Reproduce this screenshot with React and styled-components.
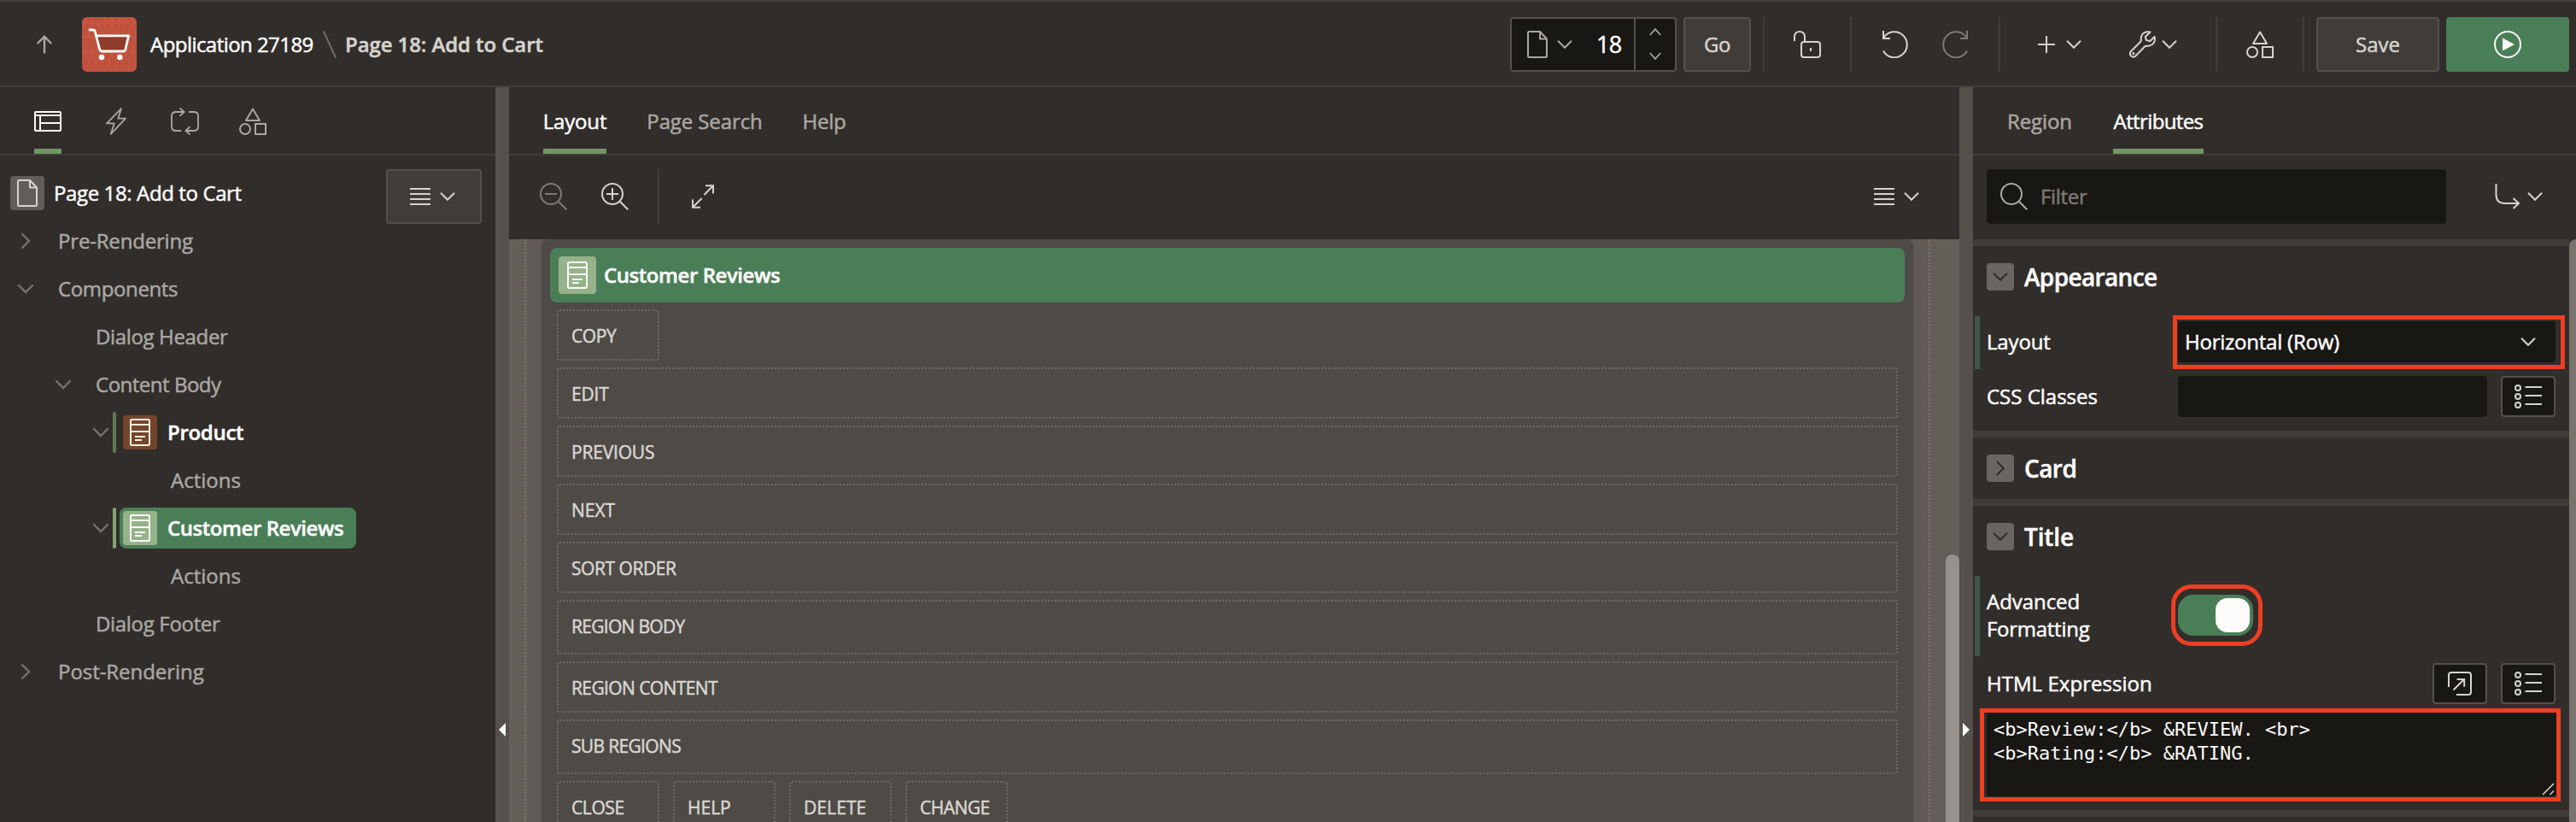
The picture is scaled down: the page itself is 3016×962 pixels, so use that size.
import React from "react";
import styled, { createGlobalStyle, css } from "styled-components";

const c = {
  bg: "#312d2a",
  line: "#403c38",
  dark: "#191714",
  edge: "#55504b",
  text: "#fcfbfa",
  soft: "#d6d3cf",
  muted: "#aaa7a3",
  dim: "#7d7974",
  green: "#4a7e57",
  leaf: "#739468",
  sage: "#96b28a",
  mark: "#ec3f24",
};

const GlobalStyle = createGlobalStyle`
  *, *::before, *::after { box-sizing: border-box; }
  body {
    margin: 0;
    background: ${c.bg};
    color: ${c.text};
    font-family: "Open Sans", "Noto Sans", sans-serif;
    font-size: 24px;
    line-height: 32px;
  }
  svg { display: block; flex: none; }
`;

/* ---------- text ---------- */

const Text = styled.span`
  display: block;
  flex: none;
  white-space: pre;
  color: ${(p) => p.$color || c.text};
  font-size: ${(p) => p.$size || 24}px;
  font-weight: ${(p) => (p.$bold ? 600 : 400)};
  letter-spacing: ${(p) => p.$ls ?? -0.4}px;
  -webkit-text-stroke: 0.5px currentColor;
`;

/* ---------- icons ---------- */

const Svg = ({ w, h, color = c.soft, sw = 2, children }) => (
  <svg width={w} height={h} viewBox={`0 0 ${w} ${h}`} fill="none" stroke={color} strokeWidth={sw}>
    {children}
  </svg>
);

const ChevronDown = ({ color, sw = 2 }) => (
  <Svg w={18} h={10} color={color} sw={sw}>
    <path d="M1 .8 9 8.8 17 .8" />
  </Svg>
);
const SmallChevron = ({ up }) => (
  <Svg w={14} h={9} color={c.muted} sw={1.8}>
    <path d={up ? "M.8 8 7 1.2 13.2 8" : "M.8 1 7 7.8 13.2 1"} />
  </Svg>
);
const TreeChevron = ({ open }) =>
  open ? (
    <Svg w={20} h={12} color="#76726d" sw={2.4}>
      <path strokeLinecap="round" d="M2 2 10 10 18 2" />
    </Svg>
  ) : (
    <Svg w={12} h={20} color="#76726d" sw={2.4}>
      <path strokeLinecap="round" d="M2 2 10 10 2 18" />
    </Svg>
  );
const BoxChevron = ({ open }) =>
  open ? (
    <Svg w={18} h={10} color={c.bg} sw={2}>
      <path d="M1 .8 9 8.8 17 .8" />
    </Svg>
  ) : (
    <Svg w={10} h={18} color={c.bg} sw={2}>
      <path d="M.8 1 8.8 9 .8 17" />
    </Svg>
  );
const ArrowUp = () => (
  <Svg w={20} h={22} color={c.muted} sw={2.4}>
    <path d="M10 21.5V2M1.8 10 10 1.8 18.2 10" />
  </Svg>
);
const Slash = () => (
  <Svg w={16} h={32} color="#6f6a66">
    <path d="M.8.5 15 31.5" />
  </Svg>
);
const Doc = ({ color }) => (
  <Svg w={24} h={32} color={color}>
    <path strokeLinejoin="round" d="M1 2.500Q1 1 2.500 1H15L23 9.500V29.500Q23 31 21.500 31H2.500Q1 31 1 29.500ZM15 1V9.500H23" />
  </Svg>
);
const RegionIcon = ({ color = c.text }) => (
  <Svg w={24} h={32} color={color}>
    <rect x="1" y="1" width="22" height="30" rx="1.500" />
    <path d="M1 7H23M1 15H23M6 21H18M6 25H14" />
  </Svg>
);
const LayoutIcon = () => (
  <Svg w={32} h={24} color={c.text}>
    <rect x="1" y="1" width="30" height="22" rx="1" />
    <path d="M1 5H31M7 5V23M7 14H31" />
  </Svg>
);
const Bolt = () => (
  <Svg w={24} h={32} color={c.muted} sw={1.8}>
    <path strokeLinejoin="round" d="M17.900 1.200 1 18.300H9.800L5.800 30.800 23 12.700H14.300Z" />
  </Svg>
);
const Loop = () => (
  <Svg w={33} h={32} color={c.muted} sw={1.8}>
    <path d="M12 27H6Q1 27 1 22V10Q1 5 6 5H15.500M10.500.6 15.600 5 10.500 9.800M21 5H27Q32 5 32 10V22Q32 27 27 27H17.500M22.500 22.200 17.400 27 22.500 31.400" />
  </Svg>
);
const Shapes = ({ color = c.soft }) => (
  <Svg w={32} h={32} color={color}>
    <path strokeLinejoin="round" d="M16 1.500 24 15H8Z" />
    <circle cx="7" cy="25" r="6" />
    <rect x="19" y="19" width="12" height="12" />
  </Svg>
);
const Lock = () => (
  <Svg w={32} h={32}>
    <rect x="9" y="13" width="22" height="18" rx="3" />
    <path d="M1 12V6.500A6 5.500 0 0 1 13 6.500V13M20 20V24" />
  </Svg>
);
const Undo = () => (
  <Svg w={32} h={32}>
    <path d="M2 23.500A14.800 15 0 1 0 2.600 8M2 0V9H10" />
  </Svg>
);
const Redo = () => (
  <Svg w={32} h={32} color={c.dim}>
    <path d="M30 23.500A14.800 15 0 1 1 29.400 8M30 0V9H22" />
  </Svg>
);
const Plus = () => (
  <Svg w={32} h={32}>
    <path d="M16 6V26M6 16H26" />
  </Svg>
);
const Wrench = () => (
  <Svg w={32} h={32}>
    <path
      strokeLinejoin="round"
      d="M25.500 1.500C20 .2 15.500 3.200 14.800 7.500C14.500 10 15.500 11.500 14 13L2.300 24.800A4 4 0 0 0 7.600 30.200L18.800 18.800C20.500 17 22 18 24.500 17.600C29 16.800 32 12.500 30.500 7L25.200 12.200 20.800 10.900 19.800 6.900Z"
    />
    <circle cx="5.800" cy="26.600" r=".6" />
  </Svg>
);
const Play = () => (
  <Svg w={32} h={32} color={c.text}>
    <circle cx="16" cy="16" r="15" />
    <path d="M10 8.500 24 16 10 23.500Z" fill={c.text} stroke="none" />
  </Svg>
);
const Lens = ({ color, sign }) => (
  <Svg w={32} h={32} color={color}>
    <circle cx="13" cy="13" r="12" />
    <path d="M21.500 21.500 31.300 31.300" />
    {sign && <path d={sign === "plus" ? "M6 13H20M13 6V20" : "M6 13H20"} />}
  </Svg>
);
const Expand = () => (
  <Svg w={26} h={28}>
    <path d="M16 1.200H25V10.500M24.500 1.800 14.500 12M1 17.500V26.800H10M1.500 26.200 11.700 16" />
  </Svg>
);
const Bars = () => (
  <Svg w={24} h={20}>
    <path d="M0 1H24M0 7H24M0 13H24M0 19H24" />
  </Svg>
);
const GoTo = () => (
  <Svg w={30} h={30}>
    <path d="M1.500 0V13Q1.500 23 12 23H28M21.500 17 28 23 21.500 29" />
  </Svg>
);
const ListIcon = () => (
  <Svg w={32} h={28}>
    <circle cx="4" cy="4" r="3" />
    <circle cx="4" cy="14" r="3" />
    <circle cx="4" cy="24" r="3" />
    <path d="M12.500 3H32M12.500 13H32M12.500 23H32" />
  </Svg>
);
const PopOut = () => (
  <Svg w={28} h={28}>
    <path d="M1 18V4Q1 1 4 1H24Q27 1 27 4V24Q27 27 24 27H10M6.500 21.500 19 9M10.500 8.900H19.200V17.800" />
  </Svg>
);
const Cart = () => (
  <svg width="64" height="64" viewBox="0 0 64 64" fill="none">
    <g stroke="#b54835" strokeWidth="1" opacity=".8">
      {[-4, 13, 30, 47, 60].map((y, r) => (
        <path
          key={y}
          d={`M${r % 2 ? -3 : 0} ${y}${"q2-9 4 0t4 8q1-4 0-8".repeat(9)}`}
        />
      ))}
    </g>
    <path d="M17 22H54.500L50 40H21Z" fill="#8f3c2c" />
    <path
      d="M9 15H13Q14.800 15 15.300 17L20.500 37Q21.200 40 23.500 40H48.500Q50.300 40 50.800 38L54.600 21.800H17"
      stroke="#fff"
      strokeWidth="2.800"
      strokeLinecap="round"
      strokeLinejoin="round"
    />
    <circle cx="23" cy="47" r="3.200" fill="#fff" />
    <circle cx="44.300" cy="47" r="3.200" fill="#fff" />
  </svg>
);

/* ---------- header ---------- */

const Page = styled.div`
  display: flex;
  flex-direction: column;
  width: 3016px;
  height: 962px;
  overflow: hidden;
`;
const Header = styled.header`
  display: flex;
  justify-content: space-between;
  flex: none;
  height: 102px;
  padding: 18px 8px 14px 42px;
  border-top: 2px solid ${c.line};
  border-bottom: 2px solid ${c.line};
`;
const Crumbs = styled.div`
  display: flex;
  align-items: center;
  height: 64px;
`;
const AppIcon = styled.div`
  width: 64px;
  height: 64px;
  margin: 0 16px 0 34px;
  border-radius: 6px;
  overflow: hidden;
  background: #c35641;
`;
const CrumbGap = styled.div`
  width: 37px;
  padding-left: 11px;
`;
const CrumbLink = styled.div`
  width: 191px;
`;
const Actions = styled.div`
  display: flex;
  height: 64px;
`;
const PagePicker = styled.div`
  display: flex;
  width: 195px;
  margin-right: 8px;
  border: 2px solid ${c.edge};
  border-radius: 4px;
  background: ${c.dark};
`;
const PickerMain = styled.div`
  display: flex;
  align-items: center;
  width: 143px;
  padding-left: 18px;
  gap: 11px;
`;
const PageNumber = styled.div`
  margin-left: 17px;
`;
const Stepper = styled.div`
  display: flex;
  flex: 1;
  flex-direction: column;
  align-items: center;
  justify-content: space-between;
  padding: 11px 0 12px;
  border-left: 2px solid ${c.edge};
`;
const Button = styled.div`
  display: flex;
  align-items: center;
  justify-content: center;
  gap: 11px;
  flex: none;
  width: ${(p) => p.$w}px;
  height: 64px;
  border-radius: 4px;
  ${(p) =>
    p.$hot
      ? css`
          background: ${c.green};
        `
      : css`
          background: #403c38;
          border: 2px solid ${c.edge};
        `}
`;
const MenuButton = styled(Button)`
  padding-right: 3px;
`;
const Rule = styled.div`
  flex: none;
  width: 2px;
  height: 64px;
  background: ${c.line};
`;
const Spacer = styled.div`
  flex: none;
  width: ${(p) => p.$w}px;
`;
const Cell = styled.div`
  display: flex;
  align-items: center;
  justify-content: center;
  gap: ${(p) => p.$gap || 0}px;
  width: ${(p) => p.$w}px;
`;
const Split = styled.div`
  display: flex;
  align-items: center;
  gap: ${(p) => p.$gap}px;
`;

/* ---------- shared panes ---------- */

const Body = styled.main`
  display: flex;
  flex: 1;
  min-height: 0;
`;
const Pane = styled.section`
  display: flex;
  flex-direction: column;
  flex: none;
  width: ${(p) => p.$w}px;
`;
const Splitter = styled.div`
  display: flex;
  justify-content: center;
  flex: none;
  width: 16px;
  padding-top: 744px;
  background: #55504b;
`;
const Tabs = styled.nav`
  display: flex;
  gap: 48px;
  flex: none;
  height: 80px;
  padding-left: 40px;
  border-bottom: 2px solid ${c.line};
`;
const Tab = styled.div`
  display: flex;
  align-items: center;
  justify-content: center;
  width: ${(p) => p.$w}px;
  padding-top: 8px;
  border-bottom: 6px solid ${(p) => (p.$on ? c.leaf : "transparent")};
`;
const Toolbar = styled.div`
  display: flex;
  align-items: center;
  flex: none;
  height: 98px;
  padding: 0 ${(p) => p.$r}px 2px ${(p) => p.$l}px;
`;
const Push = styled.div`
  flex: 1;
`;

/* ---------- tree ---------- */

const TreeArea = styled.div`
  display: flex;
  padding: 16px 16px 0 0;
`;
const Tree = styled.div`
  flex: 1;
`;
const Node = styled.div`
  display: flex;
  align-items: center;
  height: 56px;
  padding-left: ${(p) => p.$level * 44}px;
`;
const RootNode = styled(Node)`
  padding-left: 12px;
  gap: 11px;
`;
const Toggle = styled.div`
  display: flex;
  justify-content: center;
  flex: none;
  width: ${(p) => (p.$tight ? 42 : 68)}px;
  padding-left: ${(p) => (p.$tight ? 18 : 0)}px;
  padding-right: ${(p) => (p.$tight ? 0 : 8)}px;
`;
const Strip = styled.div`
  flex: none;
  width: 4px;
  height: 48px;
  margin: 0 4px 0 2px;
  border-radius: 2px;
  background: ${(p) => p.$color};
`;
const Pill = styled.div`
  display: flex;
  align-items: center;
  gap: 12px;
  height: 48px;
  padding: 0 16px 0 4px;
  width: 277px;
  border-radius: 8px;
  background: ${(p) => (p.$on ? c.green : "transparent")};
`;
const Badge = styled.div`
  display: flex;
  align-items: center;
  justify-content: center;
  flex: none;
  width: ${(p) => p.$s || 40}px;
  height: ${(p) => p.$s || 40}px;
  border-radius: 4px;
  background: ${(p) => p.$bg};
`;

const Branch = ({ level, open, ls, children }) => (
  <Node $level={level}>
    <Toggle>{open === undefined ? null : <TreeChevron open={open} />}</Toggle>
    <Text $color={c.muted} $ls={ls}>
      {children}
    </Text>
  </Node>
);
const RegionNode = ({ on, strip, badge, icon, ls, children }) => (
  <Node $level={2}>
    <Toggle $tight>
      <TreeChevron open />
    </Toggle>
    <Strip $color={strip} />
    <Pill $on={on}>
      <Badge $bg={badge}>
        <RegionIcon color={icon} />
      </Badge>
      <Text $bold $ls={ls}>
        {children}
      </Text>
    </Pill>
  </Node>
);

/* ---------- layout canvas ---------- */

const Canvas = styled.div`
  display: flex;
  flex: 1;
  min-height: 0;
  padding-left: 18px;
  overflow: hidden;
  background: #655f5a;
`;
const Frame = styled.div`
  width: 1646px;
  height: 720px;
  padding: 0 18px;
  border: dotted #7b7671;
  border-width: 0 2px;
`;
const RegionPanel = styled.div`
  height: 720px;
  padding: 10px;
  border-radius: 8px;
  background: #4e4a46;
  box-shadow: 0 0 28px rgba(40, 34, 30, 0.2);
`;
const RegionBar = styled.div`
  display: flex;
  align-items: center;
  gap: 9px;
  height: 64px;
  padding-left: 10px;
  border-radius: 8px;
  background: ${c.green};
`;
const Slots = styled.div`
  display: flex;
  flex-direction: column;
  gap: 8px;
  padding: 8px;
`;
const SlotRow = styled.div`
  display: flex;
  gap: 16px;
`;
const Slot = styled.div`
  flex: none;
  width: ${(p) => (p.$small ? "120px" : "100%")};
  height: ${(p) => (p.$tall ? 64 : 60)}px;
  padding-left: 15px;
  border: 2px dotted #6f6a65;
  border-radius: 3px;
  line-height: 58px;
`;
const Track = styled.div`
  width: 16px;
  margin-left: 18px;
  padding-top: 369px;
`;
const Thumb = styled.div`
  width: 16px;
  height: 340px;
  border-radius: 8px 8px 0 0;
  background: #96918d;
`;

const slots = [
  [["COPY", -0.4]],
  [["EDIT", -0.2]],
  [["PREVIOUS", -0.2]],
  [["NEXT", 0]],
  [["SORT ORDER", -0.45]],
  [["REGION BODY", -0.7]],
  [["REGION CONTENT", -0.6]],
  [["SUB REGIONS", -0.66]],
  [["CLOSE", -0.4], ["HELP", 0], ["DELETE", 0.1], ["CHANGE", -0.5]],
];

/* ---------- property editor ---------- */

const FilterBox = styled.div`
  display: flex;
  align-items: center;
  gap: 15px;
  width: 538px;
  height: 64px;
  padding-left: 16px;
  border-radius: 4px;
  background: ${c.dark};
`;
const Props = styled.div`
  display: flex;
  flex: 1;
  min-height: 0;
`;
const Groups = styled.div`
  width: 698px;
`;
const PropThumb = styled.div`
  width: 8px;
  border-radius: 8px 0 0 0;
  background: #79736e;
`;
const Group = styled.div`
  padding: 20px 16px ${(p) => p.$pb}px 2px;
  border-top: 8px solid ${c.line};
`;
const GroupHead = styled.div`
  display: flex;
  align-items: center;
  gap: 12px;
  height: 32px;
  margin: 0 0 ${(p) => (p.$closed ? 20 : 28)}px 14px;
`;
const Caret = styled.div`
  display: flex;
  align-items: center;
  justify-content: center;
  width: 32px;
  height: 32px;
  border-radius: 4px;
  background: #6a6560;
`;
const Field = styled.div`
  display: flex;
  align-items: center;
  height: ${(p) => p.$h || 64}px;
`;
const Changed = styled.div`
  align-self: stretch;
  width: 6px;
  margin: 2px 8px 0 0;
  background: ${(p) => (p.$on ? "#3f5843" : "transparent")};
`;
const Label = styled.div`
  width: 224px;
  padding-bottom: 1px;
  line-height: 32px;
`;
const Highlight = styled.div`
  position: absolute;
  inset: ${(p) => p.$inset};
  border: 5px solid ${c.mark};
  border-radius: ${(p) => p.$r || 0}px;
`;
const Select = styled.div`
  position: relative;
  display: flex;
  align-items: center;
  justify-content: space-between;
  width: 442px;
  height: 48px;
  padding: 0 23px 0 8px;
  border-radius: 4px;
  background: ${c.dark};
`;
const Input = styled.div`
  width: 362px;
  height: 48px;
  margin-right: 16px;
  border-radius: 4px;
  background: ${c.dark};
`;
const IconButton = styled.div`
  display: flex;
  align-items: center;
  justify-content: center;
  width: 64px;
  height: 48px;
  border: 2px solid ${c.edge};
  border-radius: 4px;
  background: ${c.dark};
`;
const Switch = styled.div`
  position: relative;
  display: flex;
  justify-content: flex-end;
  width: 88px;
  height: 48px;
  padding: 4px;
  border-radius: 18px;
  background: ${c.green};
`;
const Knob = styled.div`
  width: 40px;
  height: 40px;
  border-radius: 14px;
  background: ${c.text};
`;
const Code = styled.div`
  position: relative;
  height: 100px;
  margin-left: 14px;
  width: 667px;
  padding: 8px 0 0 8px;
  border-radius: 4px;
  background: ${c.dark};
  font: 22px/28px "DejaVu Sans Mono", monospace;
  white-space: pre;
`;
const Grip = styled.div`
  position: absolute;
  right: 2px;
  bottom: 1px;
`;

/* ---------- page ---------- */

export default function App() {
  return (
    <Page>
      <GlobalStyle />
      <Header>
        <Crumbs>
          <ArrowUp />
          <AppIcon>
            <Cart />
          </AppIcon>
          <CrumbLink>
            <Text $ls={-0.55}>Application 27189</Text>
          </CrumbLink>
          <CrumbGap>
            <Slash />
          </CrumbGap>
          <Text $bold $ls={-0.09} $color={c.soft}>
            Page 18: Add to Cart
          </Text>
        </Crumbs>
        <Actions>
          <PagePicker>
            <PickerMain>
              <Doc color={c.muted} />
              <ChevronDown color={c.muted} />
              <PageNumber>
                <Text $size={27} $ls={-0.8}>
                  18
                </Text>
              </PageNumber>
            </PickerMain>
            <Stepper>
              <SmallChevron up />
              <SmallChevron />
            </Stepper>
          </PagePicker>
          <Button $w={79}>
            <Text $color={c.soft}>Go</Text>
          </Button>
          <Spacer $w={14} />
          <Rule />
          <Cell $w={100}>
            <Lock />
          </Cell>
          <Rule />
          <Cell $w={172} $gap={38}>
            <Undo />
            <Redo />
          </Cell>
          <Rule />
          <Spacer $w={38} />
          <Split $gap={7}>
            <Plus />
            <ChevronDown />
          </Split>
          <Spacer $w={55} />
          <Split $gap={7}>
            <Wrench />
            <ChevronDown />
          </Split>
          <Spacer $w={45} />
          <Rule />
          <Cell $w={100}>
            <Shapes />
          </Cell>
          <Rule />
          <Spacer $w={14} />
          <Button $w={144}>
            <Text $color={c.soft} $ls={0}>
              Save
            </Text>
          </Button>
          <Spacer $w={8} />
          <Button $w={144} $hot>
            <Play />
          </Button>
        </Actions>
      </Header>

      <Body>
        <Pane $w={580}>
          <Tabs>
            <Tab $w={32} $on>
              <LayoutIcon />
            </Tab>
            <Tab $w={32}>
              <Bolt />
            </Tab>
            <Tab $w={32}>
              <Loop />
            </Tab>
            <Tab $w={32}>
              <Shapes color={c.muted} />
            </Tab>
          </Tabs>
          <TreeArea>
            <Tree>
              <RootNode>
                <Badge $bg="#625d58">
                  <Doc color={c.soft} />
                </Badge>
                <Text $ls={-0.38}>Page 18: Add to Cart</Text>
              </RootNode>
              <Branch level={0} open={false} ls={-0.18}>Pre-Rendering</Branch>
              <Branch level={0} open ls={-0.37}>Components</Branch>
              <Branch level={1} ls={-0.35}>Dialog Header</Branch>
              <Branch level={1} open ls={-0.49}>Content Body</Branch>
              <RegionNode strip="#5e7a54" badge="#74452d" icon="#fdeedd" ls={-0.31}>
                Product
              </RegionNode>
              <Branch level={3} ls={0}>Actions</Branch>
              <RegionNode on strip="#84a376" badge={c.sage} ls={-0.44}>
                Customer Reviews
              </RegionNode>
              <Branch level={3} ls={0}>Actions</Branch>
              <Branch level={1} ls={-0.32}>Dialog Footer</Branch>
              <Branch level={0} open={false} ls={-0.05}>Post-Rendering</Branch>
            </Tree>
            <MenuButton $w={112}>
              <Bars />
              <ChevronDown />
            </MenuButton>
          </TreeArea>
        </Pane>

        <Splitter>
          <Svg w={8} h={16}>
            <path d="M8 0V16L0 8Z" fill={c.text} stroke="none" />
          </Svg>
        </Splitter>

        <Pane $w={1698}>
          <Tabs>
            <Tab $w={74} $on>
              <Text $ls={-0.17}>Layout</Text>
            </Tab>
            <Tab $w={134}>
              <Text $ls={-0.1} $color={c.muted}>Page Search</Text>
            </Tab>
            <Tab $w={50}>
              <Text $ls={-0.21} $color={c.muted}>Help</Text>
            </Tab>
          </Tabs>
          <Toolbar $l={36} $r={47}>
            <Lens color={c.dim} sign="minus" />
            <Spacer $w={40} />
            <Lens sign="plus" />
            <Spacer $w={34} />
            <Rule />
            <Spacer $w={38} />
            <Expand />
            <Push />
            <Split $gap={11}>
              <Bars />
              <ChevronDown />
            </Split>
          </Toolbar>
          <Canvas>
            <Frame>
              <RegionPanel>
                <RegionBar>
                  <Badge $bg={c.sage} $s={44}>
                    <RegionIcon />
                  </Badge>
                  <Text $bold $ls={-0.44}>
                    Customer Reviews
                  </Text>
                </RegionBar>
                <Slots>
                  {slots.map((row, r) => (
                    <SlotRow key={r}>
                      {row.map(([name, ls]) => (
                        <Slot key={name} $small={r === 0 || row.length > 1} $tall={r === 5 || r === 7}>
                          <Text $size={21} $ls={ls} $color="#d9d6d2">
                            {name}
                          </Text>
                        </Slot>
                      ))}
                    </SlotRow>
                  ))}
                </Slots>
              </RegionPanel>
            </Frame>
            <Track>
              <Thumb />
            </Track>
          </Canvas>
        </Pane>

        <Splitter>
          <Svg w={8} h={16}>
            <path d="M0 0V16L8 8Z" fill={c.text} stroke="none" />
          </Svg>
        </Splitter>

        <Pane $w={706}>
          <Tabs>
            <Tab $w={76}>
              <Text $ls={-0.1} $color={c.muted}>Region</Text>
            </Tab>
            <Tab $w={106} $on>
              <Text $ls={-0.62}>Attributes</Text>
            </Tab>
          </Tabs>
          <Toolbar $l={16} $r={39}>
            <FilterBox>
              <Lens color={c.muted} />
              <Text $color={c.dim} $ls={-0.31}>
                Filter
              </Text>
            </FilterBox>
            <Push />
            <Split $gap={8}>
              <GoTo />
              <ChevronDown />
            </Split>
          </Toolbar>
          <Props>
            <Groups>
              <Group $pb={8}>
                <GroupHead>
                  <Caret>
                    <BoxChevron open />
                  </Caret>
                  <Text $bold $size={28} $ls={-0.64}>
                    Appearance
                  </Text>
                </GroupHead>
                <Field>
                  <Changed $on />
                  <Label>
                    <Text $ls={-0.17}>Layout</Text>
                  </Label>
                  <Select>
                    <Text $ls={-0.23}>Horizontal (Row)</Text>
                    <ChevronDown />
                    <Highlight $inset="-7px -11px -8px -6px" />
                  </Select>
                </Field>
                <Field>
                  <Changed />
                  <Label>
                    <Text $ls={0}>CSS Classes</Text>
                  </Label>
                  <Input />
                  <IconButton>
                    <ListIcon />
                  </IconButton>
                </Field>
              </Group>
              <Group $pb={0}>
                <GroupHead $closed>
                  <Caret>
                    <BoxChevron />
                  </Caret>
                  <Text $bold $size={28} $ls={-0.56}>
                    Card
                  </Text>
                </GroupHead>
              </Group>
              <Group $pb={16}>
                <GroupHead>
                  <Caret>
                    <BoxChevron open />
                  </Caret>
                  <Text $bold $size={28} $ls={-0.13}>
                    Title
                  </Text>
                </GroupHead>
                <Field $h={96}>
                  <Changed $on />
                  <Label>
                    <Text $ls={-0.05}>Advanced</Text>
                    <Text $ls={-0.27}>Formatting</Text>
                  </Label>
                  <Switch>
                    <Knob />
                    <Highlight $inset="-12px -11px -12px -8px" $r={24} />
                  </Switch>
                </Field>
                <Field>
                  <Changed />
                  <Label>
                    <Text $ls={0.04}>HTML Expression</Text>
                  </Label>
                  <Push />
                  <IconButton>
                    <PopOut />
                  </IconButton>
                  <Spacer $w={16} />
                  <IconButton>
                    <ListIcon />
                  </IconButton>
                </Field>
                <Code>
                  {"<b>Review:</b> &REVIEW. <br>\n<b>Rating:</b> &RATING."}
                  <Grip>
                    <Svg w={15} h={15} color="#d0cdca" sw={1.6}>
                      <path d="M1 14 14 1M9.500 14 14 9.500" />
                    </Svg>
                  </Grip>
                  <Highlight $inset="-3px -5px -6px -8px" />
                </Code>
              </Group>
              <Group $pb={0} />
            </Groups>
            <PropThumb />
          </Props>
        </Pane>
      </Body>
    </Page>
  );
}
